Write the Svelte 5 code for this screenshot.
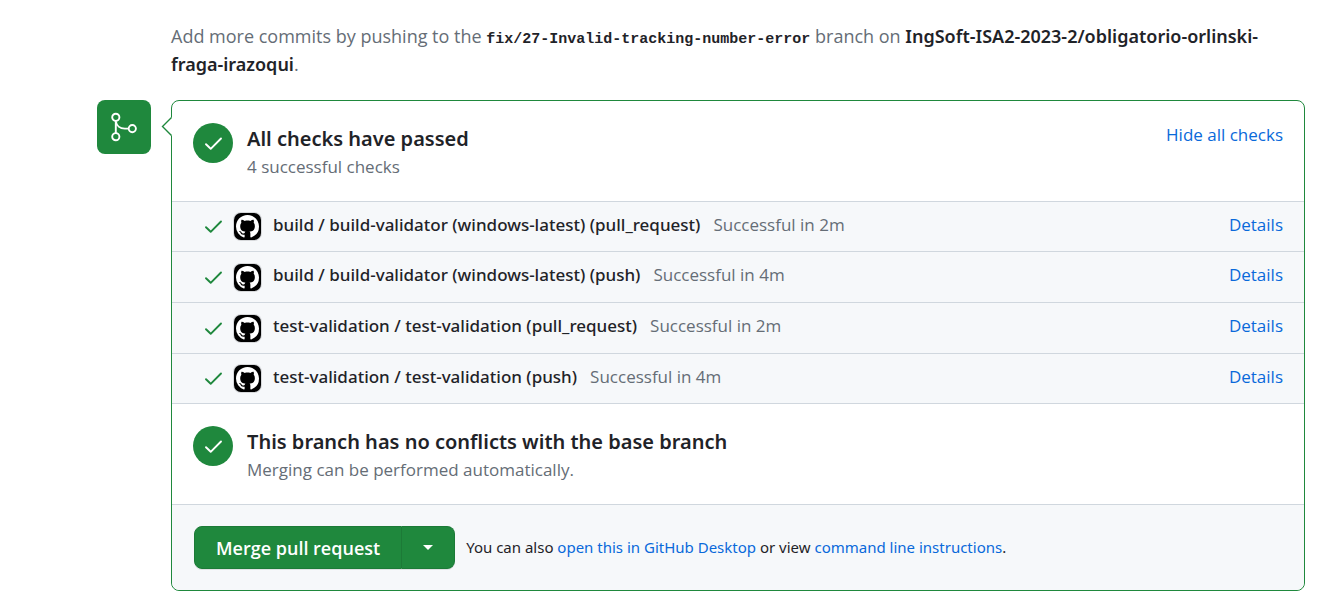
<script>
  const checks = [
    { name: 'build / build-validator (windows-latest) (pull_request)', status: 'Successful in 2m' },
    { name: 'build / build-validator (windows-latest) (push)', status: 'Successful in 4m' },
    { name: 'test-validation / test-validation (pull_request)', status: 'Successful in 2m' },
    { name: 'test-validation / test-validation (push)', status: 'Successful in 4m' }
  ];
  const octocat = 'M8 0c4.42 0 8 3.58 8 8a8.013 8.013 0 0 1-5.45 7.59c-.4.08-.55-.17-.55-.38 0-.27.01-1.13.01-2.2 0-.75-.25-1.23-.54-1.48 1.78-.2 3.65-.88 3.65-3.95 0-.88-.31-1.59-.82-2.15.08-.2.36-1.02-.08-2.12 0 0-.67-.22-2.2.82-.64-.18-1.32-.27-2-.27-.68 0-1.36.09-2 .27-1.53-1.03-2.2-.82-2.2-.82-.44 1.1-.16 1.92-.08 2.12-.51.56-.82 1.28-.82 2.15 0 3.06 1.86 3.75 3.64 3.95-.23.2-.44.55-.51 1.07-.46.21-1.61.55-2.33-.66-.15-.24-.6-.83-1.23-.82-.67.01-.27.38.01.53.34.19.73.9.82 1.13.16.45.68 1.31 2.69.94 0 .67.01 1.3.01 1.49 0 .21-.15.45-.55.38A7.995 7.995 0 0 1 0 8c0-4.42 3.58-8 8-8Z';
</script>

{#snippet tick()}
  <svg class="tick" width="21" height="21" viewBox="0 0 21 21" aria-hidden="true"><path d="M3 11.200 7.700 15.800 18 5.500" /></svg>
{/snippet}

{#snippet passed()}
  <span class="circle">{@render tick()}</span>
{/snippet}

<main>
  <p class="intro">
    Add more commits by pushing to the <code>fix/27-Invalid-tracking-number-error</code> branch on
    <strong>IngSoft-ISA2-2023-2/obligatorio-orlinski-fraga-irazoqui</strong>.
  </p>

  <div class="merge">
    <span class="badge">
      <svg width="32" height="32" viewBox="0 0 32 32" fill="none" stroke="currentColor" stroke-width="1.900" aria-hidden="true">
        <circle cx="7.800" cy="6.300" r="3.600" />
        <circle cx="7.800" cy="25.700" r="3.600" />
        <circle cx="24.300" cy="17.600" r="3.600" />
        <path d="M7.800 9.900v12.200M7.800 10c.6 4.600 4.200 7.600 9 7.600h4" />
      </svg>
    </span>

    <div class="box">
      <svg class="pointer" width="12" height="22" viewBox="0 0 12 22" aria-hidden="true">
        <path d="M11 1 1.500 10.500 11 20" fill="#fff" />
        <path d="M10.500 1.500 1.500 10.500 10.500 19.500" fill="none" stroke="#1f883d" stroke-width="1.400" />
      </svg>

      <section class="summary">
        {@render passed()}
        <div class="heading">
          <h3>All checks have passed</h3>
          <p>4 successful checks</p>
        </div>
        <button class="link" type="button">Hide all checks</button>
      </section>

      <ul>
        {#each checks as check}
          <li>
            {@render tick()}
            <span class="avatar">
              <svg width="23" height="23" viewBox="0 0 16 16" fill="#fff" aria-hidden="true"><path d={octocat} /></svg>
            </span>
            <span class="label">
              <span class="name">{check.name}</span>
              <span class="status">{check.status}</span>
              <a href="#details">Details</a>
            </span>
          </li>
        {/each}
      </ul>

      <section class="summary">
        {@render passed()}
        <div class="heading">
          <h3>This branch has no conflicts with the base branch</h3>
          <p>Merging can be performed automatically.</p>
        </div>
      </section>

      <footer>
        <div class="group">
          <button class="primary" type="button">Merge pull request</button>
          <button class="primary caret" type="button" aria-label="Select merge method">
            <svg width="10" height="5" viewBox="0 0 10 5" fill="currentColor" aria-hidden="true"><path d="M0 0h10L5 5Z" /></svg>
          </button>
        </div>
        <p>
          You can also <a href="#desktop">open this in GitHub Desktop</a> or view
          <a href="#cli">command line instructions</a>.
        </p>
      </footer>
    </div>
  </div>
</main>

<style>
  :global(body) { margin: 0; background: #fff; }
  main {
    padding: 22px 32px 20px 97px;
    color: #1f2328;
    font-family: "Open Sans", "Noto Sans", sans-serif;
    font-size: 17px;
    line-height: 28px;
  }
  p, h3, ul { margin: 0; padding: 0; }
  .intro { margin-left: 74px; padding-right: 16px; color: #656d76; font-size: 18px; }
  strong { color: #1f2328; font-family: "Noto Sans", sans-serif; font-size: 18px; font-weight: 600; line-height: 20px; }
  code { color: #1f2328; font: bold 15px/20px "Liberation Mono", monospace; }
  a { color: #0969da; text-decoration: none; }
  button { font-family: inherit; cursor: pointer; }

  .merge { display: flex; align-items: flex-start; gap: 20px; margin-top: 22px; }
  .badge {
    display: grid;
    place-items: center;
    flex: none;
    width: 54px;
    height: 54px;
    border-radius: 8px;
    background: #1f883d;
    color: #fff;
  }
  .box {
    position: relative;
    flex: 1;
    min-width: 0;
    border: 1px solid #1f883d;
    border-radius: 8px;
  }
  .pointer { position: absolute; left: -11px; top: 15px; }

  .summary { display: flex; align-items: flex-start; gap: 14px; padding: 22px 21px 20px; }
  .circle {
    display: grid;
    place-items: center;
    flex: none;
    width: 40px;
    height: 40px;
    border-radius: 50%;
    background: #1f883d;
    color: #fff;
  }
  .heading { flex: 1; padding-bottom: 2px; }
  h3 { font-family: "Noto Sans", sans-serif; font-size: 20px; font-weight: 600; line-height: 32px; }
  .heading p { line-height: 24px; color: #656d76; }
  .link { padding: 0; border: 0; background: none; color: #0969da; font-size: 17px; line-height: 24px; }

  ul { list-style: none; border-bottom: 1px solid #d0d7de; }
  li {
    display: flex;
    align-items: center;
    height: 50px;
    padding: 0 21px 0 31px;
    border-top: 1px solid #d0d7de;
    background: #f6f8fa;
    white-space: nowrap;
  }
  li:first-child, li:last-child { height: 49px; }
  .tick { fill: none; stroke: currentColor; stroke-width: 1.9; stroke-linecap: round; stroke-linejoin: round; }
  li .tick { color: #1f883d; }
  .avatar {
    display: grid;
    place-items: center;
    width: 27px;
    height: 27px;
    margin: 0 12px 0 10px;
    border-radius: 7px;
    background: #000;
    box-shadow: 0 0 0 1px #1f232826;
  }
  .label { display: flex; flex: 1; padding-bottom: 4px; }
  .name { font-family: "Noto Sans", sans-serif; font-weight: 500; }
  .status { margin-left: 13px; color: #656d76; }
  li a { margin-left: auto; }

  footer {
    display: flex;
    align-items: center;
    gap: 11px;
    padding: 21px 22px;
    border-top: 1px solid #d0d7de;
    border-radius: 0 0 8px 8px;
    background: #f6f8fa;
    font-family: "Noto Sans", sans-serif;
    font-size: 15px;
  }
  footer p { padding-bottom: 2px; }
  .group { display: flex; border-radius: 8px; box-shadow: 0 1px 0 #1f23281a; }
  .primary {
    height: 43px;
    padding: 0 21px;
    border: 1px solid #1c7a37;
    border-radius: 8px 0 0 8px;
    background: #1f883d;
    color: #fff;
    font-family: "Open Sans", sans-serif;
    font-size: 18px;
    font-weight: 600;
  }
  .caret { display: grid; place-items: center; border-left: 0; border-radius: 0 8px 8px 0; }
</style>
